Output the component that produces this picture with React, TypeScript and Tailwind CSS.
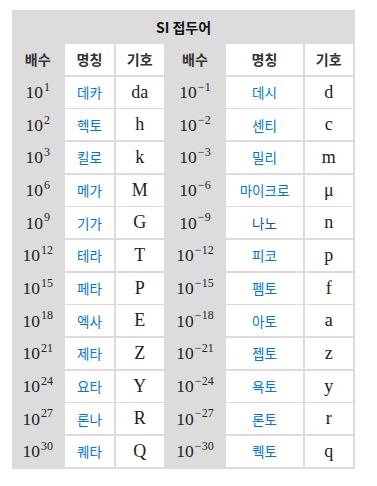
import React from "react";

const rows: [string, string, string, string, string, string][] = [
  ["1", "데카", "da", "−1", "데시", "d"],
  ["2", "헥토", "h", "−2", "센티", "c"],
  ["3", "킬로", "k", "−3", "밀리", "m"],
  ["6", "메가", "M", "−6", "마이크로", "μ"],
  ["9", "기가", "G", "−9", "나노", "n"],
  ["12", "테라", "T", "−12", "피코", "p"],
  ["15", "페타", "P", "−15", "펨토", "f"],
  ["18", "엑사", "E", "−18", "아토", "a"],
  ["21", "제타", "Z", "−21", "젭토", "z"],
  ["24", "요타", "Y", "−24", "욕토", "y"],
  ["27", "론나", "R", "−27", "론토", "r"],
  ["30", "퀘타", "Q", "−30", "퀙토", "q"],
];

function Pow({ e }: { e: string }) {
  return (
    <div className="flex items-center justify-center font-['Liberation_Serif','DejaVu_Serif',serif] text-[17.5px] text-[#222]">
      <span>
        10
        <sup className="ml-[1px] top-[-0.6em] text-[12px]">{e}</sup>
      </span>
    </div>
  );
}

function Name({ t, dark }: { t: string; dark?: boolean }) {
  return (
    <div
      className={
        dark
          ? "flex items-center justify-center bg-white font-['Noto_Sans_CJK_KR','Liberation_Sans',sans-serif] text-[13.5px] text-[#1c4fae]"
          : "flex items-center justify-center bg-white font-['Noto_Sans_CJK_KR','Liberation_Sans',sans-serif] text-[13.5px] text-[#0275d8]"
      }
    >
      {t}
    </div>
  );
}

function Sym({ t }: { t: string }) {
  return (
    <div className="flex items-center justify-center bg-white font-['Liberation_Serif','DejaVu_Serif',serif] text-[18px] text-[#222]">
      {t}
    </div>
  );
}

function Head({ t, white }: { t: string; white?: boolean }) {
  return (
    <div
      className={
        white
          ? "flex items-center justify-center bg-white font-['Noto_Sans_CJK_KR','Liberation_Sans',sans-serif] text-[14px] font-bold text-[#333]"
          : "flex items-center justify-center font-['Noto_Sans_CJK_KR','Liberation_Sans',sans-serif] text-[14px] font-bold text-[#333]"
      }
    >
      {t}
    </div>
  );
}

export default function App() {
  return (
    <div className="min-h-[486px] w-[377px] bg-white pt-[10px] pl-[12px]">
      <div className="w-[343px] bg-[#dcdcdc] pr-[2px] pb-[2px]">
        <div className="flex h-[34px] items-center justify-center pl-[2px] font-['Noto_Sans_CJK_KR','Liberation_Sans',sans-serif] text-[14px] font-bold text-[#111]">
          SI 접두어
        </div>
        <div className="grid auto-rows-[31px] grid-cols-[51.5px_49px_48.5px_59px_77px_48.5px] gap-x-[1.5px] gap-y-[1.67px]">
          <Head t="배수" />
          <Head t="명칭" white />
          <Head t="기호" white />
          <Head t="배수" />
          <Head t="명칭" white />
          <Head t="기호" white />
          {rows.map((r, i) => (
            <React.Fragment key={i}>
              <Pow e={r[0]} />
              <Name t={r[1]} />
              <Sym t={r[2]} />
              <Pow e={r[3]} />
              <Name t={r[4]} dark={r[4] === "나노"} />
              <Sym t={r[5]} />
            </React.Fragment>
          ))}
        </div>
      </div>
    </div>
  );
}
